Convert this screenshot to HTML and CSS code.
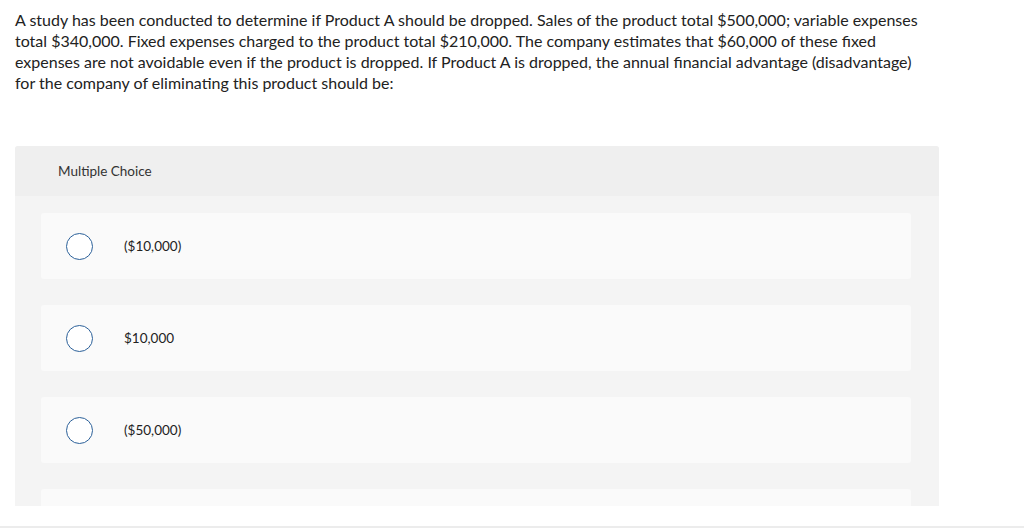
FILE: index.html
```html
<!DOCTYPE html>
<html>
<head>
<meta charset="utf-8">
<link rel="stylesheet" href="styles.css">
</head>
<body>
<div class="page">
  <div class="viewport">
    <p class="question">A study has been conducted to determine if Product A should be dropped. Sales of the product total $500,000; variable expenses total $340,000. Fixed expenses charged to the product total $210,000. The company estimates that $60,000 of these fixed expenses are not avoidable even if the product is dropped. If Product A is dropped, the annual financial advantage (disadvantage) for the company of eliminating this product should be:</p>
    <div class="panel">
      <div class="panel-head">Multiple Choice</div>
      <div class="panel-body">
        <div class="option"><span class="radio"></span><span class="label">($10,000)</span></div>
        <div class="option"><span class="radio"></span><span class="label">$10,000</span></div>
        <div class="option"><span class="radio"></span><span class="label">($50,000)</span></div>
        <div class="option"></div>
      </div>
    </div>
  </div>
  <div class="footer"></div>
</div>
</body>
</html>
```
FILE: styles.css
```css
html, body {
  margin: 0;
  padding: 0;
  background: #ffffff;
}
body {
  font-family: Lato, "Open Sans", sans-serif;
  color: #222222;
}
.page {
  width: 1024px;
  height: 531px;
  display: flex;
  flex-direction: column;
}
.viewport {
  height: 506px;
  overflow: hidden;
  padding: 0 15px;
}
.question {
  margin: 0;
  padding-top: 9px;
  width: 915px;
  font-size: 16px;
  line-height: 21px;
  color: #222222;
}
.panel {
  margin-top: 53px;
  width: 924px;
  border-radius: 3px 3px 0 0;
  overflow: hidden;
  background: #f4f4f4;
}
.panel-head {
  height: 50px;
  background: #efefef;
  display: flex;
  align-items: center;
  padding-left: 43px;
  font-size: 13.5px;
  color: #333333;
}
.panel-body {
  padding: 17px 28px 20px 26px;
  display: flex;
  flex-direction: column;
  gap: 26px;
}
.option {
  height: 66px;
  background: #fafafa;
  border-radius: 3px;
  display: flex;
  align-items: center;
  padding-left: 25px;
}
.radio {
  width: 25px;
  height: 25px;
  border: 1.5px solid #2b6099;
  border-radius: 50%;
  background: #ffffff;
  flex: none;
}
.label {
  margin-left: 31px;
  font-size: 13.5px;
  color: #222222;
}
.footer {
  margin-top: 20px;
  height: 2px;
  background: #ececec;
}
```
